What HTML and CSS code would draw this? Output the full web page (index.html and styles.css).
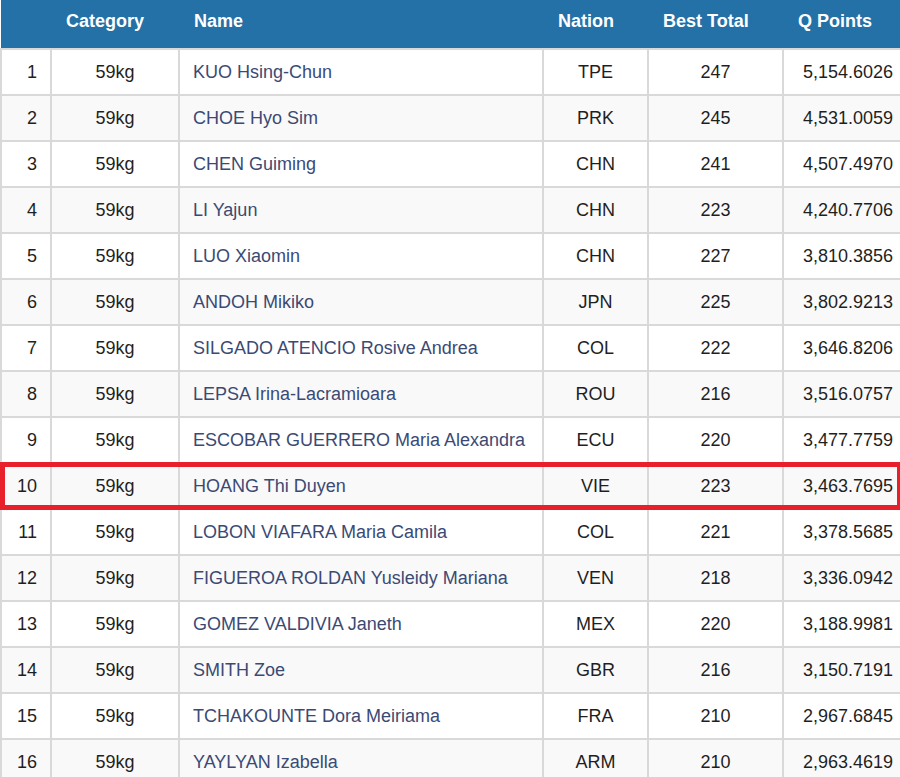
FILE: index.html
```html
<!DOCTYPE html>
<html>
<head>
<meta charset="utf-8">
<link rel="stylesheet" href="styles.css">
</head>
<body>
<table class="ranking">
  <colgroup>
    <col class="c-rank"><col class="c-cat"><col class="c-name"><col class="c-nation"><col class="c-total"><col class="c-q">
  </colgroup>
  <thead>
    <tr><th></th><th>Category</th><th>Name</th><th>Nation</th><th>Best Total</th><th>Q Points</th></tr>
  </thead>
  <tbody>
    <tr><td class="rank">1</td><td class="ctr">59kg</td><td class="name">KUO Hsing-Chun</td><td class="ctr">TPE</td><td class="ctr">247</td><td class="num">5,154.6026</td></tr>
    <tr><td class="rank">2</td><td class="ctr">59kg</td><td class="name">CHOE Hyo Sim</td><td class="ctr">PRK</td><td class="ctr">245</td><td class="num">4,531.0059</td></tr>
    <tr><td class="rank">3</td><td class="ctr">59kg</td><td class="name">CHEN Guiming</td><td class="ctr">CHN</td><td class="ctr">241</td><td class="num">4,507.4970</td></tr>
    <tr><td class="rank">4</td><td class="ctr">59kg</td><td class="name">LI Yajun</td><td class="ctr">CHN</td><td class="ctr">223</td><td class="num">4,240.7706</td></tr>
    <tr><td class="rank">5</td><td class="ctr">59kg</td><td class="name">LUO Xiaomin</td><td class="ctr">CHN</td><td class="ctr">227</td><td class="num">3,810.3856</td></tr>
    <tr><td class="rank">6</td><td class="ctr">59kg</td><td class="name">ANDOH Mikiko</td><td class="ctr">JPN</td><td class="ctr">225</td><td class="num">3,802.9213</td></tr>
    <tr><td class="rank">7</td><td class="ctr">59kg</td><td class="name">SILGADO ATENCIO Rosive Andrea</td><td class="ctr">COL</td><td class="ctr">222</td><td class="num">3,646.8206</td></tr>
    <tr><td class="rank">8</td><td class="ctr">59kg</td><td class="name">LEPSA Irina-Lacramioara</td><td class="ctr">ROU</td><td class="ctr">216</td><td class="num">3,516.0757</td></tr>
    <tr><td class="rank">9</td><td class="ctr">59kg</td><td class="name">ESCOBAR GUERRERO Maria Alexandra</td><td class="ctr">ECU</td><td class="ctr">220</td><td class="num">3,477.7759</td></tr>
    <tr class="highlight"><td class="rank">10</td><td class="ctr">59kg</td><td class="name">HOANG Thi Duyen</td><td class="ctr">VIE</td><td class="ctr">223</td><td class="num">3,463.7695</td></tr>
    <tr><td class="rank">11</td><td class="ctr">59kg</td><td class="name">LOBON VIAFARA Maria Camila</td><td class="ctr">COL</td><td class="ctr">221</td><td class="num">3,378.5685</td></tr>
    <tr><td class="rank">12</td><td class="ctr">59kg</td><td class="name">FIGUEROA ROLDAN Yusleidy Mariana</td><td class="ctr">VEN</td><td class="ctr">218</td><td class="num">3,336.0942</td></tr>
    <tr><td class="rank">13</td><td class="ctr">59kg</td><td class="name">GOMEZ VALDIVIA Janeth</td><td class="ctr">MEX</td><td class="ctr">220</td><td class="num">3,188.9981</td></tr>
    <tr><td class="rank">14</td><td class="ctr">59kg</td><td class="name">SMITH Zoe</td><td class="ctr">GBR</td><td class="ctr">216</td><td class="num">3,150.7191</td></tr>
    <tr><td class="rank">15</td><td class="ctr">59kg</td><td class="name">TCHAKOUNTE Dora Meiriama</td><td class="ctr">FRA</td><td class="ctr">210</td><td class="num">2,967.6845</td></tr>
    <tr><td class="rank">16</td><td class="ctr">59kg</td><td class="name">YAYLYAN Izabella</td><td class="ctr">ARM</td><td class="ctr">210</td><td class="num">2,963.4619</td></tr>
  </tbody>
</table>
</body>
</html>
```

FILE: styles.css
```css
html, body {
  margin: 0;
  padding: 0;
  background: #ffffff;
}
body {
  font-family: "Liberation Sans", Arial, sans-serif;
  font-size: 18px;
  color: #1f1f1f;
  overflow: hidden;
}
.ranking {
  width: 900px;
  border-collapse: collapse;
  table-layout: fixed;
}
.c-rank { width: 50px; }
.c-cat { width: 128px; }
.c-name { width: 364px; }
.c-nation { width: 105px; }
.c-total { width: 135px; }
.c-q { width: 118px; }

.ranking thead th {
  background: #2471a7;
  color: #ffffff;
  font-weight: bold;
  text-align: left;
  vertical-align: top;
  height: 49px;
  box-sizing: border-box;
  padding: 11px 0 0 15px;
  line-height: 21px;
  border: none;
}
.ranking tbody td {
  height: 46px;
  box-sizing: border-box;
  padding: 0 14px;
  line-height: 21px;
  border: 2px solid #d9d9d9;
  white-space: nowrap;
}
.ranking tbody tr:nth-child(even) td {
  background: #f9f9f9;
}
.ranking td.rank { text-align: right; padding: 0 13px 0 0; }
.ranking td.ctr { text-align: center; padding: 0; }
.ranking td.name { color: #3b4a74; padding-left: 13px; }
.ranking td.num { text-align: right; padding-right: 7px; }

.ranking tr.highlight {
  outline: 5px solid #e8202b;
  outline-offset: -4px;
}
```
